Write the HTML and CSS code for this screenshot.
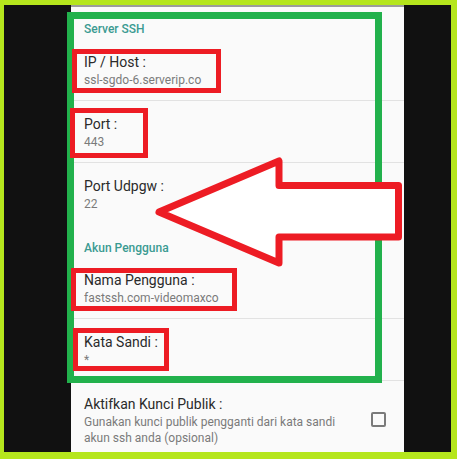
FILE: index.html
```html
<!DOCTYPE html>
<html>
<head>
<meta charset="utf-8">
<link rel="stylesheet" href="styles.css">
</head>
<body>
<div class="frame">
  <div class="screen">
    <div class="category first">Server SSH</div>
    <div class="pref divided">
      <div class="title">IP / Host :</div>
      <div class="summary">ssl-sgdo-6.serverip.co</div>
    </div>
    <div class="pref divided">
      <div class="title">Port :</div>
      <div class="summary">443</div>
    </div>
    <div class="pref">
      <div class="title">Port Udpgw :</div>
      <div class="summary">22</div>
    </div>
    <div class="category second">Akun Pengguna</div>
    <div class="pref divided">
      <div class="title">Nama Pengguna :</div>
      <div class="summary">fastssh.com-videomaxco</div>
    </div>
    <div class="pref divided">
      <div class="title">Kata Sandi :</div>
      <div class="summary">*</div>
    </div>
    <div class="pref check-row">
      <div class="text">
        <div class="title">Aktifkan Kunci Publik :</div>
        <div class="summary">Gunakan kunci publik pengganti dari kata sandi<br>akun ssh anda (opsional)</div>
      </div>
      <div class="checkbox"></div>
    </div>
  </div>
</div>
<svg class="annotations" width="457" height="459" viewBox="0 0 457 459">
  <rect x="70.5" y="15.5" width="308" height="364" fill="none" stroke="#22b14c" stroke-width="7"/>
  <rect x="74.5" y="51.5" width="144" height="39" fill="none" stroke="#ed1c24" stroke-width="5"/>
  <rect x="72.5" y="110.5" width="73" height="45" fill="none" stroke="#ed1c24" stroke-width="5"/>
  <rect x="73.5" y="270.5" width="161" height="38" fill="none" stroke="#ed1c24" stroke-width="5"/>
  <rect x="75.5" y="330.5" width="91" height="38" fill="none" stroke="#ed1c24" stroke-width="5"/>
  <polygon points="159,212 279,161 279,185.5 398.5,185.5 398.5,237 279,237 279,263" fill="#ffffff" stroke="#ed1c24" stroke-width="7" stroke-linejoin="round"/>
</svg>
</body>
</html>
```

FILE: styles.css
```css
html, body {
  margin: 0;
  padding: 0;
}
body {
  width: 457px;
  height: 459px;
  background: #b5e61d;
  position: relative;
  overflow: hidden;
  font-family: Roboto, "Noto Sans", sans-serif;
}
.frame {
  margin: 5px 0 0 4px;
  width: 447px;
  height: 447px;
  background: #111111;
}
.screen {
  margin-left: 67px;
  width: 333px;
  height: 445px;
  background: #fafafa;
  border-top: 2px solid #9c9c9c;
  overflow: hidden;
}
.category {
  padding-left: 13px;
  font-size: 12px;
  line-height: 16px;
  font-weight: 500;
  color: #3a9a92;
}
.category.first {
  padding-top: 14px;
  padding-bottom: 2px;
}
.category.second {
  padding-top: 16px;
  padding-bottom: 1px;
}
.pref {
  padding: 15px 0 12px 13px;
}
.pref.divided {
  border-bottom: 1px solid #e2e2e2;
}
.title {
  font-size: 14px;
  line-height: 17px;
  color: #2a2a2a;
}
.summary {
  margin-top: 1px;
  font-size: 12px;
  line-height: 16px;
  color: #7a7a7a;
}
.check-row {
  display: flex;
  align-items: flex-start;
  justify-content: space-between;
  padding-right: 18px;
}
.checkbox {
  width: 11px;
  height: 11px;
  margin-top: 16px;
  border: 2px solid #7a7a7a;
  border-radius: 2px;
}
.annotations {
  position: absolute;
  left: 0;
  top: 0;
  pointer-events: none;
}
```
